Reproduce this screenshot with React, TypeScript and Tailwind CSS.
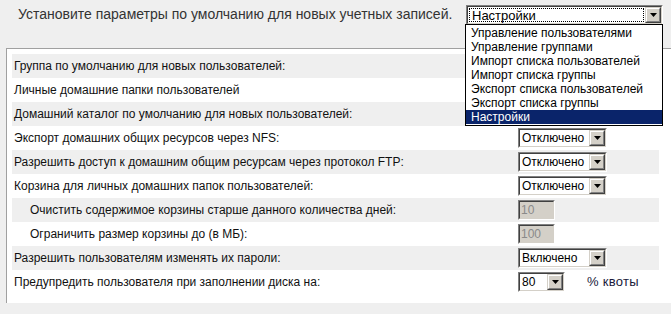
import React from "react";

const FONT = { fontFamily: '"Liberation Sans", Arial, sans-serif' };

function Arrow() {
  return (
    <div className="w-[16px] h-full flex border border-t-[#d4d0c8] border-l-[#d4d0c8] border-r-[#404040] border-b-[#404040]">
      <div className="flex-1 flex items-center justify-center bg-[#d4d0c8] border border-t-white border-l-white border-r-[#808080] border-b-[#808080]">
        <svg width="7" height="4" viewBox="0 0 7 4">
          <polygon points="0,0 7,0 3.5,4" fill="#000" />
        </svg>
      </div>
    </div>
  );
}

function Sunken({ className, children, inner }: { className: string; children: React.ReactNode; inner?: string }) {
  return (
    <div className={"flex border border-t-[#808080] border-l-[#808080] border-r-white border-b-white " + className}>
      <div className={"flex-1 flex border border-t-[#404040] border-l-[#404040] border-r-[#d4d0c8] border-b-[#d4d0c8] " + (inner ?? "bg-white")}>
        {children}
      </div>
    </div>
  );
}

function Sel({ text, w }: { text: string; w: string }) {
  return (
    <Sunken className={w + " h-[20px]"}>
      <div className="flex-1 flex items-center pl-[2px] text-[12px] text-black leading-none">{text}</div>
      <Arrow />
    </Sunken>
  );
}

function Inp({ text }: { text: string }) {
  return (
    <Sunken className="w-[37px] h-[20px]" inner="bg-[#d4d0c8]">
      <div className="flex-1 flex items-center pl-[1px] text-[12px] text-[#8a8a8a] leading-none">{text}</div>
    </Sunken>
  );
}

type Row = { label: string; indent?: boolean; ctrl?: React.ReactNode };

const rows: Row[] = [
  { label: "Группа по умолчанию для новых пользователей:" },
  { label: "Личные домашние папки пользователей" },
  { label: "Домашний каталог по умолчанию для новых пользователей:" },
  { label: "Экспорт домашних общих ресурсов через NFS:", ctrl: <Sel text="Отключено" w="w-[89px]" /> },
  { label: "Разрешить доступ к домашним общим ресурсам через протокол FTP:", ctrl: <Sel text="Отключено" w="w-[89px]" /> },
  { label: "Корзина для личных домашних папок пользователей:", ctrl: <Sel text="Отключено" w="w-[89px]" /> },
  { label: "Очистить содержимое корзины старше данного количества дней:", indent: true, ctrl: <Inp text="10" /> },
  { label: "Ограничить размер корзины до (в МБ):", indent: true, ctrl: <Inp text="100" /> },
  { label: "Разрешить пользователям изменять их пароли:", ctrl: <Sel text="Включено" w="w-[89px]" /> },
  {
    label: "Предупредить пользователя при заполнении диска на:",
    ctrl: (
      <div className="flex items-center">
        <Sel text="80" w="w-[47px]" />
        <span className="ml-[22px] text-[13px] tracking-[0.3px] text-[#1a1a3a]">% квоты</span>
      </div>
    ),
  },
];

const menu = [
  "Управление пользователями",
  "Управление группами",
  "Импорт списка пользователей",
  "Импорт списка группы",
  "Экспорт списка пользователей",
  "Экспорт списка группы",
  "Настройки",
];

export default function App() {
  return (
    <div className="relative w-[671px] h-[314px] overflow-hidden bg-[#efefef]" style={FONT}>
      <div className="h-[48px] flex items-start">
        <div className="pl-[18px] pt-[6px] text-[14px] leading-[16px] text-[#333]">
          Установите параметры по умолчанию для новых учетных записей.
        </div>
        <div className="ml-auto mr-[8px] mt-[5px]">
          <Sunken className="w-[197px] h-[20px]">
            <div className="flex-1 flex p-[1px]">
              <div className="flex-1 flex items-center pl-[2px] border border-dotted border-black text-[13px] leading-none text-black">
                Настройки
              </div>
            </div>
            <Arrow />
          </Sunken>
        </div>
      </div>
      <div className="ml-[6px] w-[700px] border-l border-t border-[#a0a0a0] bg-white pt-[5px] pl-[5px] pb-[9px]">
        {rows.map((r, i) => (
          <div
            key={i}
            className={
              "w-[647px] h-[24px] flex items-center text-[12px] text-[#111] " +
              (i % 2 === 0 ? "bg-[#efefef]" : "bg-white")
            }
          >
            <div className={"w-[506px] " + (r.indent ? "pl-[18px]" : "pl-[2px]")}>{r.label}</div>
            {r.ctrl}
          </div>
        ))}
      </div>
      <div className="absolute left-[465px] top-[24px] w-[198px] border border-black bg-white py-[1px]">
        {menu.map((m, i) => (
          <div
            key={i}
            className={
              "h-[14px] flex items-center pl-[5px] text-[12px] leading-none " +
              (i === menu.length - 1 ? "bg-[#0a246a] text-white" : "text-black")
            }
          >
            {m}
          </div>
        ))}
      </div>
    </div>
  );
}
